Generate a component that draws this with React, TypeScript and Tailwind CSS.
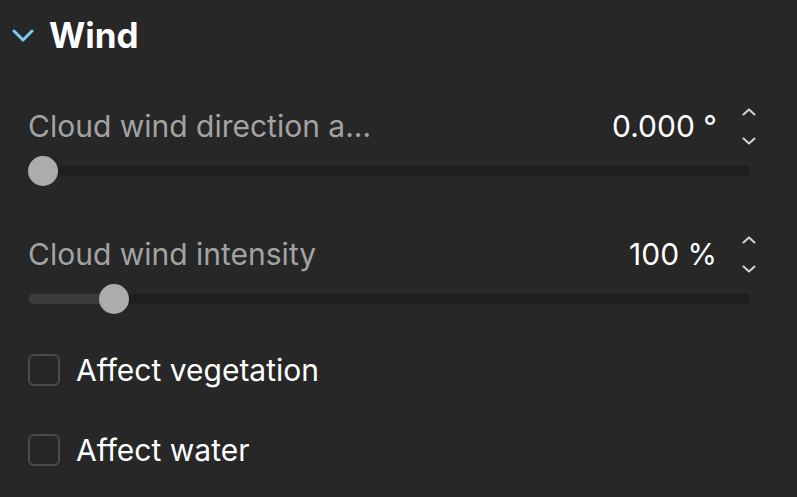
import { useState } from 'react'

interface SliderRowProps {
  label: string
  value: string
  percent: number
}

function Spinner() {
  return (
    <div className="flex flex-col items-center justify-between h-[37px] w-[14px]">
      <svg width="14" height="8" viewBox="0 0 14 8" fill="none">
        <path d="M1.5 6.5 L7 1.5 L12.5 6.5" stroke="#d4d4d4" strokeWidth="2" strokeLinecap="round" strokeLinejoin="round" />
      </svg>
      <svg width="14" height="8" viewBox="0 0 14 8" fill="none">
        <path d="M1.5 1.5 L7 6.5 L12.5 1.5" stroke="#d4d4d4" strokeWidth="2" strokeLinecap="round" strokeLinejoin="round" />
      </svg>
    </div>
  )
}

function SliderRow({ label, value, percent }: SliderRowProps) {
  // thumb travels across the track minus its own width
  const thumbLeft = `calc(${percent}% - ${percent * 0.3}px)`
  return (
    <div className="flex flex-col">
      <div className="flex items-center h-[40px]">
        <span className="flex-1 text-[30px] text-[#a3a3a3] truncate">{label}</span>
        <span className="text-[30px] text-white mr-[25px]">{value}</span>
        <Spinner />
      </div>
      {/* track */}
      <div className="relative mt-[10px] mr-[6px] h-[30px] flex items-center">
        <div className="w-full h-[10px] rounded-full bg-[#1e1e1e] overflow-hidden">
          <div className="h-full bg-[#3c3c3c] rounded-full" style={{ width: percent > 0 ? `calc(${thumbLeft} + 15px)` : '0px' }} />
        </div>
        <div className="absolute top-0 h-[30px] w-[30px] rounded-full bg-[#acacac]" style={{ left: thumbLeft }} />
      </div>
    </div>
  )
}

function Checkbox({ label }: { label: string }) {
  const [checked, setChecked] = useState(false)
  return (
    <button onClick={() => setChecked(!checked)} className="flex items-center gap-[16px] h-[32px] text-left">
      <span className="w-[32px] h-[32px] rounded-[6px] border-2 border-[#4b4b4b] flex items-center justify-center">
        {checked && <span className="w-[14px] h-[14px] bg-white rounded-sm" />}
      </span>
      <span className="text-[30px] text-white">{label}</span>
    </button>
  )
}

export default function App() {
  return (
    <div
      className="w-[797px] h-[497px] bg-[#272727] overflow-hidden"
      style={{ fontFamily: 'Inter, "Noto Sans", sans-serif' }}
    >
      {/* Header */}
      <div className="flex items-center h-[70px] pl-[12px]">
        <svg width="22" height="14" viewBox="0 0 22 14" fill="none" className="mt-[2px]">
          <path d="M2 2 L11 11 L20 2" stroke="#7ccdf2" strokeWidth="3" strokeLinecap="round" strokeLinejoin="round" />
        </svg>
        <span className="ml-[15px] text-[35px] font-bold text-white">Wind</span>
      </div>

      <div className="pl-[28px] pr-[41px] pt-[36px] flex flex-col">
        <SliderRow label="Cloud wind direction a..." value="0.000 °" percent={0} />
        <div className="h-[48px]" />
        <SliderRow label="Cloud wind intensity" value="100 %" percent={10.2} />
        <div className="mt-[40px] flex flex-col gap-[48px]">
          <Checkbox label="Affect vegetation" />
          <Checkbox label="Affect water" />
        </div>
      </div>
    </div>
  )
}
